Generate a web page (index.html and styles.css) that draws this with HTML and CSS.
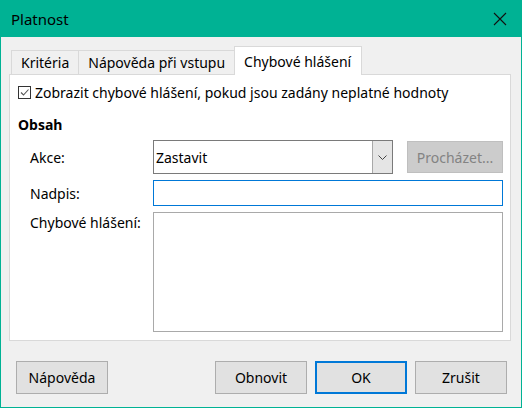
FILE: index.html
```html
<!DOCTYPE html>
<html lang="cs">
<head>
<meta charset="utf-8">
<title>Platnost</title>
<link rel="stylesheet" href="styles.css">
</head>
<body>
<div class="window">
  <div class="titlebar">
    <span class="title">Platnost</span>
    <svg class="close" width="14" height="14" viewBox="0 0 14 14"><path d="M1 1 L13 13 M13 1 L1 13" stroke="#111" stroke-width="1.1" fill="none"/></svg>
  </div>
  <div class="content">
    <div class="tabs">
      <div class="tab first">Kritéria</div>
      <div class="tab">Nápověda při vstupu</div>
      <div class="tab active">Chybové hlášení</div>
    </div>
    <div class="panel">
      <div class="check-row">
        <span class="checkbox"><svg width="11" height="11" viewBox="0 0 11 11"><path d="M2 5.5 L4.5 8 L9.5 2.5" stroke="#555" stroke-width="1.1" fill="none"/></svg></span>
        <span>Zobrazit chybové hlášení, pokud jsou zadány neplatné hodnoty</span>
      </div>
      <div class="section">Obsah</div>
      <div class="form">
        <div class="label label-mid">Akce:</div>
        <div class="field-row">
          <div class="combo">
            <span class="combo-text">Zastavit</span>
            <span class="combo-btn"><svg width="9" height="5" viewBox="0 0 9 5"><path d="M0.5 0.5 L4.5 4.5 L8.5 0.5" stroke="#444" stroke-width="1" fill="none"/></svg></span>
          </div>
          <div class="btn disabled">Procházet...</div>
        </div>
        <div class="label label-mid">Nadpis:</div>
        <div class="input focused"></div>
        <div class="label label-top">Chybové hlášení:</div>
        <div class="textarea"></div>
      </div>
    </div>
    <div class="buttons">
      <div class="btn action">Nápověda</div>
      <div class="spacer"></div>
      <div class="btn action">Obnovit</div>
      <div class="btn action default">OK</div>
      <div class="btn action">Zrušit</div>
    </div>
  </div>
</div>
</body>
</html>
```
FILE: styles.css
```css
* { box-sizing: border-box; }
html, body { margin: 0; padding: 0; }
body {
  font-family: "Noto Sans", "Open Sans", sans-serif;
  font-size: 14px;
  color: #000;
  background: #f0f0f0;
}
.window {
  width: 522px;
  height: 408px;
  border: 1px solid #00b294;
  border-top: none;
  display: flex;
  flex-direction: column;
  background: #f0f0f0;
}
.titlebar {
  height: 37px;
  margin: 0 -1px;
  background: #00b294;
  display: flex;
  align-items: center;
  justify-content: space-between;
  padding: 0 15px 0 11px;
}
.title { font-size: 15px; color: #000; }
.close { display: block; }
.content {
  flex: 1;
  display: flex;
  flex-direction: column;
  padding: 9px 10px 0 8px;
}
.tabs {
  display: flex;
  align-items: flex-end;
  height: 28px;
  padding-left: 2px;
  position: relative;
  z-index: 1;
}
.tab {
  height: 24px;
  padding: 0 9px;
  border: 1px solid #d9d9d9;
  border-bottom: none;
  border-left: none;
  background: #f0f0f0;
  display: flex;
  align-items: center;
}
.tab.first { border-left: 1px solid #d9d9d9; }
.tab.active {
  height: 29px;
  margin-bottom: -1px;
  background: #fff;
  padding: 0 10px 0 9px;
  border-left: 1px solid #d9d9d9;
  margin-left: -1px;
}
.panel {
  height: 267px;
  border: 1px solid #d9d9d9;
  background: #fff;
  padding: 0 7px 0 8px;
  display: flex;
  flex-direction: column;
}
.check-row {
  margin-top: 6px;
  height: 22px;
  display: flex;
  align-items: center;
  gap: 4px;
}
.checkbox {
  width: 13px;
  height: 13px;
  border: 1px solid #333;
  display: flex;
  align-items: center;
  justify-content: center;
  background: #fff;
}
.checkbox svg { display: block; }
.section {
  margin-top: 11px;
  height: 20px;
  font-weight: bold;
  display: flex;
  align-items: center;
}
.form {
  margin-top: 6px;
  padding-left: 12px;
  display: grid;
  grid-template-columns: 123px 1fr;
  grid-template-rows: 34px 26px 120px;
  row-gap: 6px;
}
.label { display: flex; }
.label-mid { align-items: center; }
.label-top { padding-top: 1px; }
.field-row {
  display: flex;
  align-items: center;
  gap: 14px;
}
.combo {
  width: 240px;
  height: 34px;
  border: 1px solid #7a7a7a;
  display: flex;
  background: #fff;
}
.combo-text {
  flex: 1;
  display: flex;
  align-items: center;
  padding-left: 2px;
}
.combo-btn {
  width: 20px;
  border-left: 1px solid #a8a8a8;
  background: #e5e5e5;
  display: flex;
  align-items: center;
  justify-content: center;
}
.btn {
  height: 33px;
  display: flex;
  align-items: center;
  justify-content: center;
  border: 1px solid #adadad;
  background: #e1e1e1;
}
.btn.disabled {
  width: 96px;
  height: 32px;
  background: #cccccc;
  border-color: #bfbfbf;
  color: #838383;
}
.input {
  height: 26px;
  border: 1px solid #0078d7;
  background: #fff;
}
.textarea {
  border: 1px solid #a9a9a9;
  background: #fff;
}
.buttons {
  margin-top: 20px;
  display: flex;
  gap: 8px;
  padding-left: 7px;
  padding-right: 4px;
}
.spacer { flex: 1; }
.btn.action { width: 92px; }
.btn.default { border: 2px solid #0078d7; }
```
